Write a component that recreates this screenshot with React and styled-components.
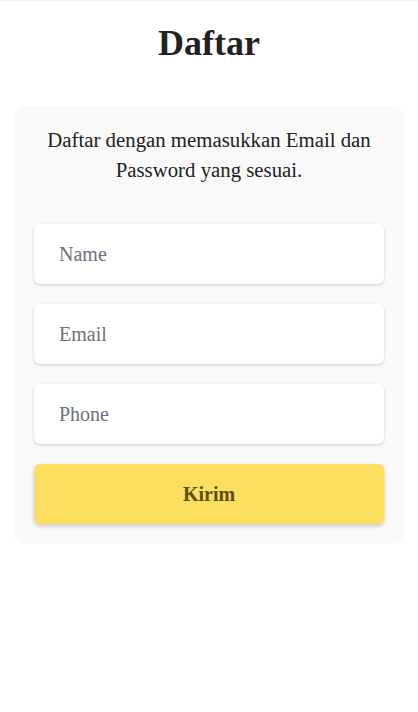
import React from "react";
import styled, { createGlobalStyle } from "styled-components";

const Global = createGlobalStyle`
  html, body { margin: 0; padding: 0; background: #fff; }
  body { font-family: "Liberation Serif", "Times New Roman", serif; color: #222; }
  * { box-sizing: border-box; }
`;

const Page = styled.div`
  border-top: 1px solid #e8eefb;
  display: flex;
  flex-direction: column;
  align-items: center;
  padding: 0 14px;
`;

const Title = styled.h1`
  margin: 21px 0 42px;
  font-size: 36px;
  line-height: 42px;
  font-weight: 700;
  color: #222;
`;

const Card = styled.div`
  width: 100%;
  background: #f9f9f9;
  border-radius: 12px;
  padding: 19px 20px 20px;
  display: flex;
  flex-direction: column;
  gap: 20px;
`;

const Intro = styled.p`
  margin: 0 0 19px;
  font-size: 20.8px;
  line-height: 30px;
  text-align: center;
  color: #222;
`;

const Field = styled.input`
  height: 60px;
  width: 100%;
  border: none;
  border-radius: 6px;
  background: #fff;
  box-shadow: 0 1px 3px rgba(0, 0, 0, 0.18);
  padding: 0 25px;
  font-family: "Liberation Serif", "Times New Roman", serif;
  font-size: 20px;
  color: #222;
  outline: none;
  &::placeholder { color: #6b7280; }
`;

const Submit = styled.button`
  height: 60px;
  width: 100%;
  border: none;
  border-radius: 6px;
  background: #fddf60;
  box-shadow: 0 2px 4px rgba(0, 0, 0, 0.2);
  font-family: "Liberation Serif", "Times New Roman", serif;
  font-size: 20px;
  font-weight: 700;
  color: #5c4f0a;
  cursor: pointer;
`;

export default function App() {
  return (
    <>
      <Global />
      <Page>
        <Title>Daftar</Title>
        <Card>
          <Intro>
            Daftar dengan memasukkan Email dan
            <br />
            Password yang sesuai.
          </Intro>
          <Field placeholder="Name" />
          <Field placeholder="Email" />
          <Field placeholder="Phone" />
          <Submit>Kirim</Submit>
        </Card>
      </Page>
    </>
  );
}
